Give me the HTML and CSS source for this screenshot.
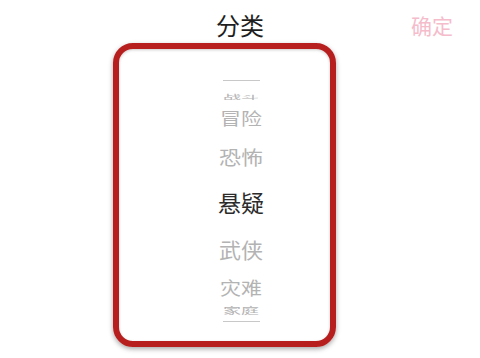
FILE: index.html
```html
<!DOCTYPE html>
<html lang="zh">
<head>
<meta charset="utf-8">
<link rel="stylesheet" href="styles.css">
</head>
<body>
<div class="page">
  <div class="header">
    <span></span>
    <h1 class="title">分类</h1>
    <button class="confirm">确定</button>
  </div>
  <div class="wheel">
    <div class="rule"></div>
    <div class="item i1"><span>战斗</span></div>
    <div class="item i2"><span>冒险</span></div>
    <div class="item i3"><span>恐怖</span></div>
    <div class="item i4 selected"><span>悬疑</span></div>
    <div class="item i5"><span>武侠</span></div>
    <div class="item i6"><span>灾难</span></div>
    <div class="item i7"><span>家庭</span></div>
    <div class="rule"></div>
  </div>
  <div class="highlight"></div>
</div>
</body>
</html>
```
FILE: styles.css
```css
html, body {
  margin: 0;
  padding: 0;
  background: #fff;
}
.page {
  position: relative;
  width: 480px;
  height: 358px;
  overflow: hidden;
  font-family: "Noto Sans CJK SC", "Noto Sans", sans-serif;
}
.header {
  display: grid;
  grid-template-columns: 1fr auto 1fr;
  align-items: center;
  height: 50px;
}
.title {
  margin: 0;
  font-size: 24px;
  font-weight: 400;
  color: #1e1e1e;
  line-height: 50px;
}
.confirm {
  justify-self: end;
  margin-right: 27px;
  padding: 0;
  border: 0;
  background: none;
  font-family: inherit;
  font-size: 21px;
  color: #f5bccb;
  line-height: 50px;
}
.wheel {
  display: flex;
  flex-direction: column;
  align-items: center;
  padding-top: 30px;
  padding-left: 2px;
}
.rule {
  width: 37px;
  height: 1px;
  background: #c8c8c8;
}
.item {
  display: flex;
  align-items: center;
  justify-content: center;
  color: #b3b3b3;
  white-space: nowrap;
}
.item span {
  display: block;
  line-height: 1;
}
.i1 { height: 24px; font-size: 18px; }
.i1 span { transform: translateY(3px) scaleY(0.32); }
.i2 { height: 26px; font-size: 21px; }
.i2 span { transform: scaleY(0.8); }
.i3 { height: 50px; font-size: 22px; }
.i3 span { transform: scaleY(0.9); }
.i4 { height: 42px; font-size: 23px; color: #2b2b2b; }
.i5 { height: 50px; font-size: 22px; }
.i5 span { transform: scaleY(0.95); }
.i6 { height: 28px; font-size: 21px; }
.i6 span { transform: scaleY(0.85); }
.i7 { height: 20px; font-size: 18px; }
.i7 span { transform: translateY(-1px) scaleY(0.5); }
.highlight {
  position: absolute;
  left: 113px;
  top: 43px;
  width: 223px;
  height: 304px;
  box-sizing: border-box;
  border: 6px solid #b71f1f;
  border-radius: 20px;
  box-shadow: 0 2px 5px rgba(0, 0, 0, 0.35), inset 0 1px 3px rgba(0, 0, 0, 0.2);
}
```
